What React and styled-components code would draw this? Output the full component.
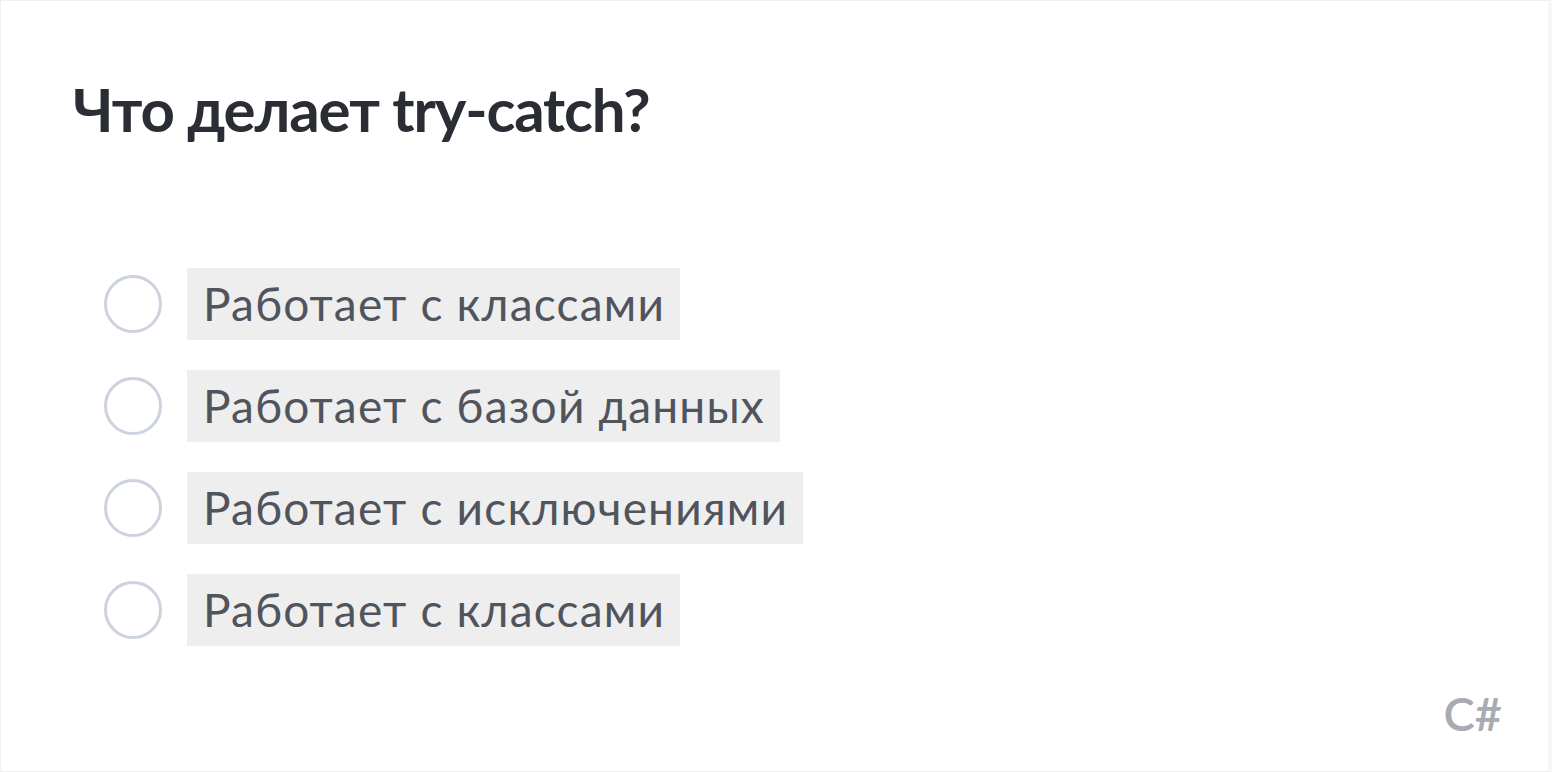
import React, { useState } from "react";
import styled, { createGlobalStyle } from "styled-components";

const GlobalStyle = createGlobalStyle`
  html, body {
    margin: 0;
    padding: 0;
    background: #ffffff;
  }
  body {
    font-family: Lato, "Open Sans", sans-serif;
  }
`;

const options = [
  "Работает с классами",
  "Работает с базой данных",
  "Работает с исключениями",
  "Работает с классами",
];

const App = () => {
  const [selected, setSelected] = useState(null);

  return (
    <>
      <GlobalStyle />
      <Card>
        <Question>Что делает try-catch?</Question>
        <OptionList>
          {options.map((text, i) => (
            <Option key={i} onClick={() => setSelected(i)}>
              <Radio checked={selected === i} />
              <Label>{text}</Label>
            </Option>
          ))}
        </OptionList>
        <Footer>
          <Language>C#</Language>
        </Footer>
      </Card>
    </>
  );
};

export default App;

const Card = styled.div`
  box-sizing: border-box;
  height: 772px;
  display: flex;
  flex-direction: column;
  padding: 72px 46px 34px 72px;
  border: 1px solid #f0f0f2;
  border-right: 4px solid #f7f7f9;
`;

const Question = styled.h1`
  margin: 0;
  font-size: 60px;
  font-weight: 700;
  line-height: 72px;
  color: #2a2d34;
  letter-spacing: -1.15px;
`;

const OptionList = styled.div`
  display: flex;
  flex-direction: column;
  gap: 30px;
  margin-top: 123px;
  padding-left: 31px;
`;

const Option = styled.label`
  display: flex;
  align-items: center;
  cursor: pointer;
`;

const Radio = styled.span`
  box-sizing: border-box;
  width: 58px;
  height: 58px;
  border-radius: 50%;
  border: 3px solid #ccd2de;
  background: ${(props) => (props.checked ? "#ccd2de" : "#fff")};
  flex: 0 0 auto;
  margin-right: 25px;
`;

const Label = styled.span`
  display: inline-block;
  background: #eeeeee;
  color: #50545c;
  font-size: 46px;
  letter-spacing: 1.2px;
  line-height: 72px;
  padding: 0 15px 0 16px;
`;

const Footer = styled.div`
  margin-top: auto;
  display: flex;
  justify-content: flex-end;
`;

const Language = styled.span`
  font-size: 47px;
  font-weight: 600;
  color: #a8abb1;
  line-height: 1;
`;
